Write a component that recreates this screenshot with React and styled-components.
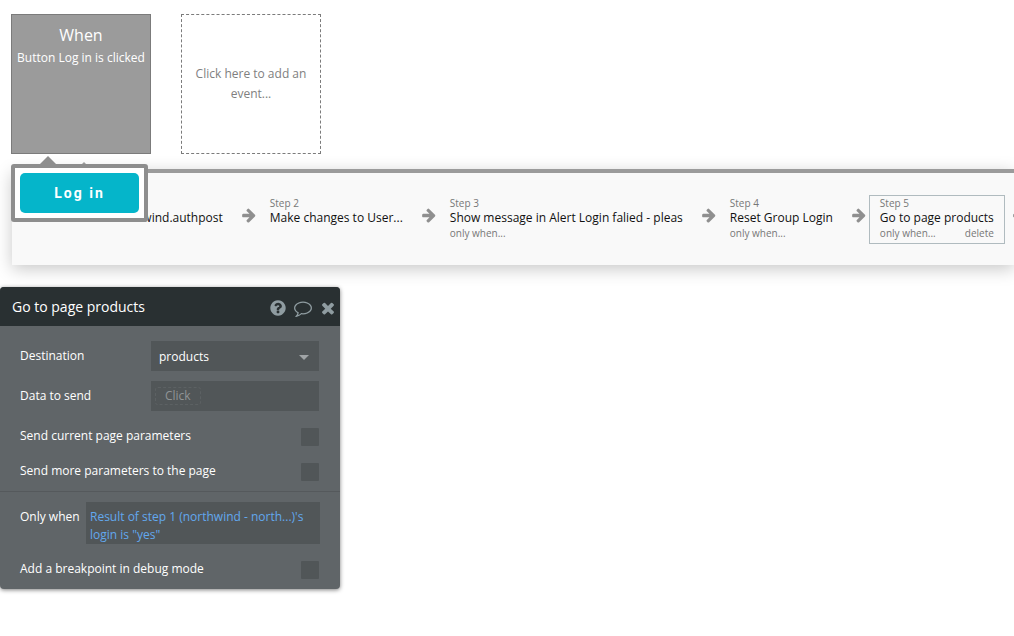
import { Fragment } from "react";
import styled, { createGlobalStyle, ThemeProvider } from "styled-components";

const theme = {
  colors: {
    grey: "#9b9b9b",
    darkGrey: "#7b7b7b",
    teal: "#05b5ca",
    header: "#293032",
    panel: "#606568",
    field: "#515658",
    icon: "#8f9ca1",
    link: "#62a8ee"
  }
};

const steps = [
  { id: 1, title: "northwind - northwind.authpost" },
  { id: 2, title: "Make changes to User..." },
  { id: 3, title: "Show message in Alert Login falied - pleas", conditional: true },
  { id: 4, title: "Reset Group Login", conditional: true },
  { id: 5, title: "Go to page products", conditional: true, selected: true }
];

const ArrowIcon = () => (
  <Arrow viewBox="0 0 1536 1792" aria-hidden="true">
    <path d="M1472 960q0 54-37 91l-651 651q-39 37-91 37-51 0-90-37l-75-75q-38-38-38-91t38-91l293-293h-704q-52 0-84.5-37.5t-32.5-90.5v-128q0-53 32.5-90.5t84.5-37.5h704l-293-294q-38-36-38-90t38-90l75-75q38-38 90-38 53 0 91 38l651 651q37 35 37 90z" />
  </Arrow>
);

const HelpIcon = () => (
  <Icon viewBox="0 0 1792 1792" aria-hidden="true">
    <path d="M1024 1376v-192q0-14-9-23t-23-9h-192q-14 0-23 9t-9 23v192q0 14 9 23t23 9h192q14 0 23-9t9-23zm256-672q0-88-55.5-163t-138.5-116-170-41q-243 0-371 213-15 24 8 42l132 100q7 6 19 6 16 0 25-12 53-68 86-92 34-24 86-24 48 0 85.5 26t37.5 59q0 38-20 61t-68 45q-63 28-115.5 86.5t-52.5 125.5v36q0 14 9 23t23 9h192q14 0 23-9t9-23q0-19 21.5-49.5t54.5-49.5q32-18 49-28.5t46-35 44.5-48 28-60.5 12.5-81zm384 192q0 209-103 385.5t-279.5 279.5-385.5 103-385.5-103-279.5-279.5-103-385.5 103-385.5 279.5-279.5 385.5-103 385.5 103 279.5 279.5 103 385.5z" />
  </Icon>
);

const CommentIcon = () => (
  <Icon viewBox="0 0 1792 1792" aria-hidden="true">
    <path d="M896 384q-204 0-381.5 69.5t-282 187.5-104.5 255q0 112 71.5 213.5t201.5 175.5l87 50-27 96q-24 91-70 172 152-63 275-171l43-38 57 6q69 8 130 8 204 0 381.5-69.5t282-187.5 104.5-255-104.5-255-282-187.5-381.5-69.5zm896 512q0 174-120 321.5t-326 233-450 85.5q-70 0-145-8-198 175-460 242-49 14-114 22h-5q-15 0-27-10.5t-16-27.5v-1q-3-4-.5-12t2-10 4.5-9.5l6-9 7-8.5 8-9q7-8 31-34.5t34.5-38 31-39.5 32.5-51 27-59 26-76q-157-89-247.5-220t-90.5-281q0-174 120-321.5t326-233 450-85.5 450 85.5 326 233 120 321.5z" />
  </Icon>
);

const CloseIcon = () => (
  <Icon viewBox="0 0 1792 1792" aria-hidden="true">
    <path d="M1490 1322q0 40-28 68l-136 136q-28 28-68 28t-68-28l-294-294-294 294q-28 28-68 28t-68-28l-136-136q-28-28-28-68t28-68l294-294-294-294q-28-28-28-68t28-68l136-136q28-28 68-28t68 28l294 294 294-294q28-28 68-28t68 28l136 136q28 28 28 68t-28 68l-294 294 294 294q28 28 28 68z" />
  </Icon>
);

export default () => (
  <ThemeProvider theme={theme}>
    <GlobalStyle />
    <Page>
      <Events>
        <EventCard>
          <EventTitle>When</EventTitle>
          Button Log in is clicked
        </EventCard>
        <AddEvent>Click here to add an event...</AddEvent>
      </Events>

      <Workflow>
        <Steps>
          {steps.map(step => (
            <Fragment key={step.id}>
              <Step $selected={step.selected}>
                <Small>Step {step.id}</Small>
                <StepTitle>{step.title}</StepTitle>
                <StepFooter>
                  {step.conditional && <Small>only when...</Small>}
                  {step.selected && <DeleteButton>delete</DeleteButton>}
                </StepFooter>
              </Step>
              <ArrowIcon />
            </Fragment>
          ))}
        </Steps>
        <Preview>
          <LoginButton>Log in</LoginButton>
        </Preview>
      </Workflow>

      <Editor>
        <EditorHeader>
          <EditorTitle>Go to page products</EditorTitle>
          <IconButton aria-label="Help"><HelpIcon /></IconButton>
          <IconButton aria-label="Comment"><CommentIcon /></IconButton>
          <IconButton aria-label="Close"><CloseIcon /></IconButton>
        </EditorHeader>
        <Section>
          <Fields>
            <FieldRow>
              <Label htmlFor="destination">Destination</Label>
              <SelectWrap>
                <Select id="destination" defaultValue="products">
                  <option value="products">products</option>
                </Select>
              </SelectWrap>
            </FieldRow>
            <FieldRow>
              <Label as="span">Data to send</Label>
              <DataField>
                <Chip>Click</Chip>
              </DataField>
            </FieldRow>
          </Fields>
          <CheckRow>
            <Label htmlFor="current">Send current page parameters</Label>
            <Checkbox id="current" />
          </CheckRow>
          <CheckRow>
            <Label htmlFor="more">Send more parameters to the page</Label>
            <Checkbox id="more" />
          </CheckRow>
        </Section>
        <Divider />
        <Section>
          <ConditionRow>
            <Label as="span">Only when</Label>
            <Expression>
              Result of step 1 (northwind - north...)'s login is "yes"
            </Expression>
          </ConditionRow>
          <CheckRow>
            <Label htmlFor="breakpoint">Add a breakpoint in debug mode</Label>
            <Checkbox id="breakpoint" />
          </CheckRow>
        </Section>
      </Editor>
    </Page>
  </ThemeProvider>
);

const GlobalStyle = createGlobalStyle`
  * {
    box-sizing: border-box;
  }

  body {
    margin: 0;
    background: #fff;
    font-family: "Open Sans", sans-serif;
    font-size: 12px;
  }

  button, select, input {
    margin: 0;
    padding: 0;
    border: 0;
    font: inherit;
    cursor: pointer;
  }
`;

const Page = styled.main`
  overflow: hidden;
  padding-top: 14px;
  padding-bottom: 40px;
`;

const Events = styled.div`
  display: flex;
  gap: 30px;
  padding-left: 11px;
`;

const EventCard = styled.div`
  width: 140px;
  height: 140px;
  padding-top: 10px;
  border: 1px solid ${p => p.theme.colors.darkGrey};
  background: ${p => p.theme.colors.grey};
  color: #fff;
  line-height: 20px;
  text-align: center;
  white-space: nowrap;
`;

const EventTitle = styled.h2`
  margin: 0;
  padding-bottom: 3px;
  font-size: 16px;
  font-weight: normal;
  line-height: 20px;
`;

const AddEvent = styled.button`
  width: 140px;
  height: 140px;
  padding: 0 10px;
  border: 1px dashed ${p => p.theme.colors.darkGrey};
  background: none;
  color: #808080;
  line-height: 20px;
`;

const Workflow = styled.section`
  position: relative;
  margin-top: 15px;
  margin-left: 12px;
`;

const Steps = styled.div`
  display: flex;
  align-items: flex-start;
  padding: 22px 0 21px 20px;
  border-top: 4px solid ${p => p.theme.colors.grey};
  background: #f9f9f9;
  box-shadow: 0 4px 16px rgba(0, 0, 0, 0.22);

  &::before {
    content: "";
    position: absolute;
    top: -7px;
    left: 65px;
    border: 7px solid transparent;
    border-top-width: 0;
    border-bottom-color: ${p => p.theme.colors.grey};
  }
`;

const Step = styled.div`
  flex: none;
  min-height: 49px;
  padding: 0 10px;
  border: 1px solid ${p => (p.$selected ? "#b0bbbf" : "transparent")};
  white-space: nowrap;
`;

const Small = styled.span`
  display: block;
  color: #777;
  font-size: 10px;
  line-height: 15px;
`;

const StepTitle = styled.div`
  color: #111;
  line-height: 14px;
`;

const StepFooter = styled.div`
  display: flex;
  justify-content: space-between;
  padding-top: 1px;
`;

const DeleteButton = styled.button`
  background: none;
  color: #777;
  font-size: 10px;
  line-height: 15px;
`;

const Arrow = styled.svg`
  flex: none;
  width: 14px;
  height: 16px;
  margin: 12px 3px 0 8px;
  fill: #8f8f8f;
`;

/* floats over the start of the workflow and points up at its event */
const Preview = styled.div`
  position: absolute;
  top: -5px;
  left: -1px;
  padding: 5px;
  border: 4px solid #8e8e8e;
  border-radius: 3px;
  background: #fff;

  &::before {
    content: "";
    position: absolute;
    bottom: 100%;
    left: 24px;
    margin-bottom: 3px;
    border: 9px solid transparent;
    border-top-width: 0;
    border-bottom-color: #8e8e8e;
  }
`;

const LoginButton = styled.button`
  display: block;
  width: 119px;
  height: 40px;
  border-radius: 5px;
  background: ${p => p.theme.colors.teal};
  color: #fff;
  font-family: Roboto, sans-serif;
  font-size: 14px;
  font-weight: bold;
  letter-spacing: 2px;
`;

const Editor = styled.section`
  width: 340px;
  margin-top: 22px;
  border-radius: 4px;
  overflow: hidden;
  background: ${p => p.theme.colors.panel};
  box-shadow: 0 1px 4px rgba(0, 0, 0, 0.5);
  color: #fff;
`;

const EditorHeader = styled.header`
  display: flex;
  align-items: center;
  gap: 7px;
  height: 39px;
  padding: 0 3px 0 12px;
  background: ${p => p.theme.colors.header};
`;

const EditorTitle = styled.h1`
  flex: 1;
  margin: 0;
  font-size: 14px;
  font-weight: normal;
`;

const IconButton = styled.button`
  display: flex;
  padding-top: 2px;
  background: none;
`;

const Icon = styled.svg`
  width: 18px;
  height: 18px;
  fill: ${p => p.theme.colors.icon};
`;

const Section = styled.div`
  display: grid;
  gap: 17px;
  padding: 10px 20px;
`;

const Divider = styled.hr`
  height: 1px;
  margin: 0;
  border: 0;
  background: #55595c;
`;

const Fields = styled.div`
  display: grid;
  gap: 10px;
  padding: 5px 1px 0 0;
`;

const FieldRow = styled.div`
  display: grid;
  grid-template-columns: 131px 1fr;
  align-items: center;
`;

const Label = styled.label`
  line-height: 16px;
`;

const SelectWrap = styled.div`
  position: relative;

  &::after {
    content: "";
    position: absolute;
    top: 14px;
    right: 10px;
    border: 5px solid transparent;
    border-top-color: #a0a4a6;
    border-bottom-width: 0;
    pointer-events: none;
  }
`;

const Select = styled.select`
  display: block;
  width: 100%;
  height: 30px;
  padding-left: 8px;
  border-radius: 0;
  background: ${p => p.theme.colors.field};
  color: #fff;
  appearance: none;
`;

const DataField = styled.div`
  display: flex;
  align-items: center;
  height: 30px;
  padding-left: 4px;
  background: ${p => p.theme.colors.field};
`;

const Chip = styled.button`
  height: 18px;
  padding: 0 9px;
  border: 1px dashed #5c6163;
  border-radius: 3px;
  background: none;
  color: #8f9496;
  line-height: 16px;
`;

const CheckRow = styled.div`
  display: flex;
  align-items: flex-start;
  justify-content: space-between;
  padding-right: 1px;
`;

const Checkbox = styled.input.attrs({ type: "checkbox" })`
  width: 18px;
  height: 18px;
  border-radius: 1px;
  background: ${p => p.theme.colors.field};
  appearance: none;
`;

const ConditionRow = styled.div`
  display: grid;
  grid-template-columns: 66px 1fr;

  ${Label} {
    padding-top: 7px;
  }
`;

const Expression = styled.button`
  height: 42px;
  padding: 6px 4px 0;
  background: ${p => p.theme.colors.field};
  color: ${p => p.theme.colors.link};
  line-height: 18px;
  text-align: left;
`;
